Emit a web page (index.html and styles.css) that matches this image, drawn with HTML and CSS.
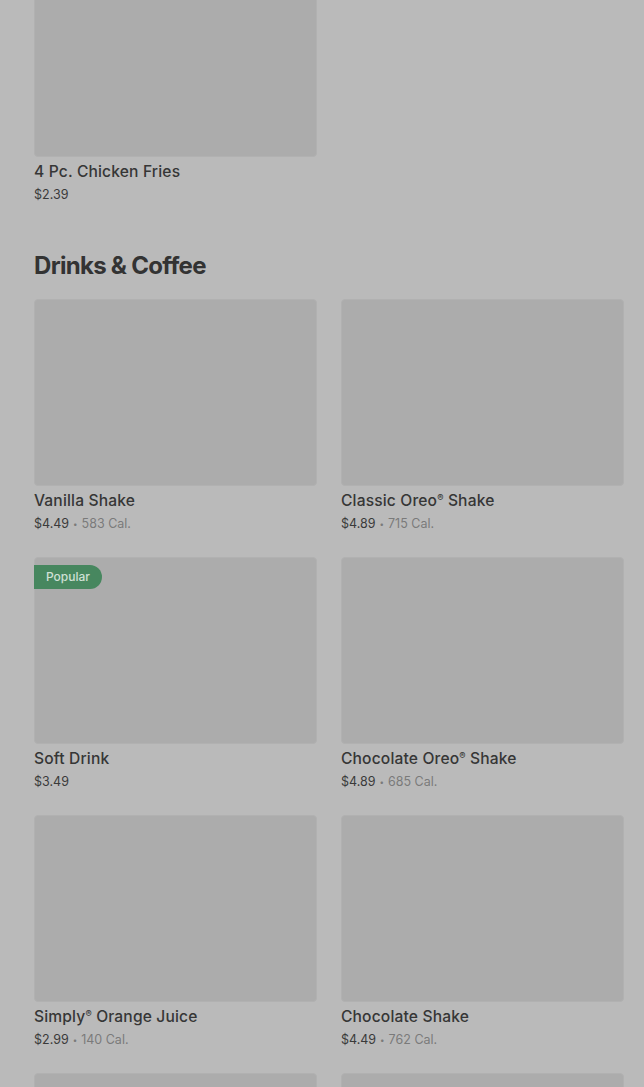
FILE: index.html
```html
<!DOCTYPE html>
<html>
<head>
<meta charset="utf-8">
<link rel="stylesheet" href="styles.css">
</head>
<body>
<main class="page">
  <section class="section first">
    <div class="grid">
      <div class="item">
        <div class="thumb"></div>
        <div class="name">4 Pc. Chicken Fries</div>
        <div class="meta"><span class="price">$2.39</span></div>
      </div>
    </div>
  </section>

  <section class="section">
    <h2 class="heading">Drinks &amp; Coffee</h2>
    <div class="grid">
      <div class="item">
        <div class="thumb"></div>
        <div class="name">Vanilla Shake</div>
        <div class="meta"><span class="price">$4.49</span><span class="dot">•</span><span class="cal">583 Cal.</span></div>
      </div>
      <div class="item">
        <div class="thumb"></div>
        <div class="name">Classic Oreo<span class="reg">®</span> Shake</div>
        <div class="meta"><span class="price">$4.89</span><span class="dot">•</span><span class="cal">715 Cal.</span></div>
      </div>
      <div class="item">
        <div class="thumb"><span class="badge">Popular</span></div>
        <div class="name">Soft Drink</div>
        <div class="meta"><span class="price">$3.49</span></div>
      </div>
      <div class="item">
        <div class="thumb"></div>
        <div class="name">Chocolate Oreo<span class="reg">®</span> Shake</div>
        <div class="meta"><span class="price">$4.89</span><span class="dot">•</span><span class="cal">685 Cal.</span></div>
      </div>
      <div class="item">
        <div class="thumb"></div>
        <div class="name">Simply<span class="reg">®</span> Orange Juice</div>
        <div class="meta"><span class="price">$2.99</span><span class="dot">•</span><span class="cal">140 Cal.</span></div>
      </div>
      <div class="item">
        <div class="thumb"></div>
        <div class="name">Chocolate Shake</div>
        <div class="meta"><span class="price">$4.49</span><span class="dot">•</span><span class="cal">762 Cal.</span></div>
      </div>
      <div class="item">
        <div class="thumb"></div>
      </div>
      <div class="item">
        <div class="thumb"></div>
      </div>
    </div>
  </section>
</main>
</body>
</html>
```

FILE: styles.css
```css
html, body {
  margin: 0;
  padding: 0;
  background: #bababa;
  height: 100%;
  overflow: hidden;
}
body {
  font-family: Inter, "Noto Sans", sans-serif;
  color: #353535;
}
.page {
  padding: 0 20px 0 34px;
  margin-top: -30px;
}
.grid {
  display: grid;
  grid-template-columns: 283px 283px;
  column-gap: 24px;
  row-gap: 24px;
}
.item {
  height: 234px;
  display: flex;
  flex-direction: column;
}
.thumb {
  position: relative;
  height: 187px;
  background: #acacac;
  border: 1px solid #b1b1b1;
  border-radius: 4px;
  box-sizing: border-box;
  flex-shrink: 0;
}
.badge {
  position: absolute;
  left: -1px;
  top: 7px;
  height: 24px;
  line-height: 24px;
  padding: 0 12px 0 12px;
  background: #47875f;
  color: #cfe0d5;
  font-size: 12px;
  font-weight: 500;
  border-radius: 0 12px 12px 0;
}
.name {
  margin-top: 5px;
  font-size: 15.6px;
  line-height: 20px;
  font-weight: 500;
  color: #363636;
  letter-spacing: 0.15px;
}
.reg {
  font-size: 0.6em;
  vertical-align: 0.5em;
  line-height: 0;
}
.meta {
  margin-top: 4px;
  font-size: 12.5px;
  line-height: 18px;
  display: flex;
  align-items: center;
}
.price {
  color: #3a3a3a;
}
.dot {
  color: #7a7a7a;
  font-size: 8px;
  margin: 0 4px;
}
.cal {
  color: #7a7a7a;
}
.heading {
  margin: 47px 0 18px 0;
  font-size: 24px;
  line-height: 30px;
  font-weight: 700;
  letter-spacing: -0.7px;
  color: #333333;
}
```
